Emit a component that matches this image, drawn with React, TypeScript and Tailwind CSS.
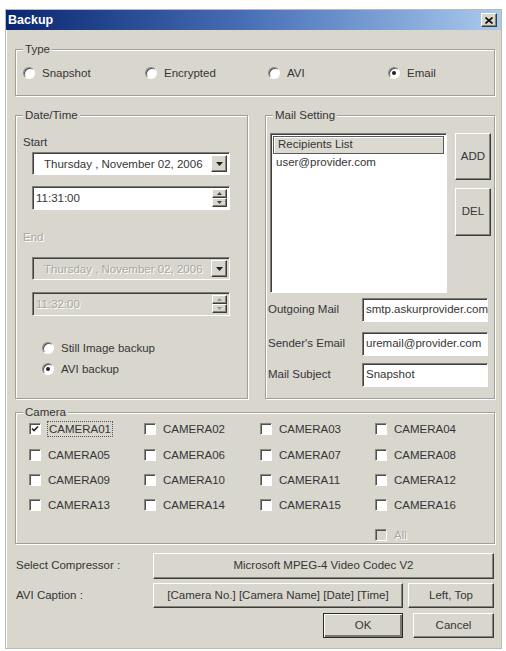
import React from "react";

const FACE = "bg-[#d9d6ce]";

function Radio({ checked, disabled }: { checked?: boolean; disabled?: boolean }) {
  return (
    <span
      className={`inline-flex h-[12px] w-[12px] shrink-0 items-center justify-center rounded-full border border-t-[#8a8780] border-l-[#8a8780] border-r-white border-b-white shadow-[inset_1px_1px_0_#505050] ${
        disabled ? FACE : "bg-white"
      }`}
    >
      {checked && <span className="h-[4px] w-[4px] rounded-full bg-[#222]" />}
    </span>
  );
}

function Check({ checked, disabled }: { checked?: boolean; disabled?: boolean }) {
  return (
    <span
      className={`inline-flex h-[12px] w-[12px] shrink-0 items-center justify-center border border-t-[#8a8780] border-l-[#8a8780] border-r-white border-b-white shadow-[inset_1px_1px_0_#505050] ${
        disabled ? FACE : "bg-white"
      }`}
    >
      {checked && (
        <svg width="8" height="8" viewBox="0 0 8 8">
          <path d="M1 3.5 L3 5.5 L7 1.5" fill="none" stroke="#222" strokeWidth="1.6" />
        </svg>
      )}
    </span>
  );
}

function Group({
  label,
  className,
  children,
}: {
  label: string;
  className?: string;
  children: React.ReactNode;
}) {
  return (
    <fieldset
      className={`min-w-0 border border-[#a29f96] shadow-[inset_1px_1px_0_#fff,1px_1px_0_#fff] ${className ?? ""}`}
    >
      <legend className={`ml-[7px] px-[2px] leading-[14px] ${FACE}`}>{label}</legend>
      {children}
    </fieldset>
  );
}

function Btn({
  children,
  className,
  isDefault,
}: {
  children: React.ReactNode;
  className?: string;
  isDefault?: boolean;
}) {
  return (
    <div
      className={`flex items-center justify-center border ${
        isDefault
          ? "border-[#2a2a2a] shadow-[inset_1px_1px_0_#fff,inset_-2px_-2px_0_#7a7770]"
          : "border-t-white border-l-white border-r-[#3c3c3c] border-b-[#3c3c3c] shadow-[inset_-1px_-1px_0_#858279]"
      } ${FACE} ${className ?? ""}`}
    >
      {children}
    </div>
  );
}

function Sunken({
  children,
  className,
  disabled,
}: {
  children?: React.ReactNode;
  className?: string;
  disabled?: boolean;
}) {
  return (
    <div
      className={`flex items-center border border-t-[#7f7c75] border-l-[#7f7c75] border-r-white border-b-white shadow-[inset_1px_1px_0_#404040] ${
        disabled ? FACE : "bg-white"
      } ${className ?? ""}`}
    >
      {children}
    </div>
  );
}

function DownArrow() {
  return (
    <svg width="7" height="4" viewBox="0 0 7 4">
      <path d="M0 0 H7 L3.5 4 Z" fill="#222" />
    </svg>
  );
}

function Combo({ text, disabled }: { text: string; disabled?: boolean }) {
  return (
    <Sunken disabled={disabled} className="ml-[9px] h-[23px] w-[198px] justify-between pl-[11px] pr-[2px]">
      <span className={disabled ? "text-[#aaa79f] [text-shadow:1px_1px_0_#fff]" : ""}>{text}</span>
      <Btn className="h-[17px] w-[16px]">
        <DownArrow />
      </Btn>
    </Sunken>
  );
}

function TimeField({ text, disabled }: { text: string; disabled?: boolean }) {
  return (
    <Sunken disabled={disabled} className="ml-[9px] h-[24px] w-[198px] justify-between pl-[3px] pr-[2px]">
      <span className={disabled ? "text-[#aaa79f] [text-shadow:1px_1px_0_#fff]" : ""}>{text}</span>
      <div className="flex flex-col">
        <Btn className="h-[9px] w-[15px]">
          <svg width="5" height="3" viewBox="0 0 5 3">
            <path d="M0 3 H5 L2.5 0 Z" fill={disabled ? "#9a978f" : "#444"} />
          </svg>
        </Btn>
        <Btn className="h-[9px] w-[15px]">
          <svg width="5" height="3" viewBox="0 0 5 3">
            <path d="M0 0 H5 L2.5 3 Z" fill={disabled ? "#9a978f" : "#444"} />
          </svg>
        </Btn>
      </div>
    </Sunken>
  );
}

const cameras = Array.from({ length: 16 }, (_, i) => `CAMERA${String(i + 1).padStart(2, "0")}`);

export default function App() {
  return (
    <div className="h-[651px] w-[506px] bg-white pl-[5px] pt-[9px] font-['Liberation_Sans',Arial,sans-serif] text-[11.5px] text-[#353535]">
      <div className={`flex h-[640px] w-[497px] flex-col border border-[#bcb9b1] shadow-[inset_1px_1px_0_#fff] ${FACE}`}>
        {/* Title bar */}
        <div className="flex h-[20px] items-center justify-between bg-gradient-to-r from-[#0b2670] via-[#4a72b8] to-[#abcaee] pl-[2px] pr-[4px]">
          <span className="text-[12.5px] font-bold text-white">Backup</span>
          <Btn className="h-[14px] w-[16px]">
            <svg width="8" height="7" viewBox="0 0 8 7">
              <path d="M0.5 0.5 L7.5 6.5 M7.5 0.5 L0.5 6.5" stroke="#111" strokeWidth="1.7" />
            </svg>
          </Btn>
        </div>

        <div className="flex flex-col pl-[9px] pr-[6px] pt-[12px]">
          {/* Type */}
          <Group label="Type" className="w-[480px]">
            <div className="grid grid-cols-[122px_123px_120px_1fr] pb-[15px] pl-[7px] pt-[10px] leading-[14px]">
              <label className="flex items-center gap-[7px]"><Radio />Snapshot</label>
              <label className="flex items-center gap-[7px]"><Radio />Encrypted</label>
              <label className="flex items-center gap-[7px]"><Radio />AVI</label>
              <label className="flex items-center gap-[7px]"><Radio checked />Email</label>
            </div>
          </Group>

          <div className="mt-[12px] flex gap-[17px]">
            {/* Date/Time */}
            <Group label="Date/Time" className="h-[291px] w-[233px]">
              <div className="flex flex-col pl-[7px] leading-[14px]">
                <span className="mt-[13px]">Start</span>
                <div className="mt-[3px]"><Combo text="Thursday  , November 02, 2006" /></div>
                <div className="mt-[11px]"><TimeField text="11:31:00" /></div>
                <span className="mt-[20px] text-[#aaa79f] [text-shadow:1px_1px_0_#fff]">End</span>
                <div className="mt-[13px]"><Combo text="Thursday  , November 02, 2006" disabled /></div>
                <div className="mt-[12px]"><TimeField text="11:32:00" disabled /></div>
                <label className="ml-[19px] mt-[25px] flex items-center gap-[7px]"><Radio />Still Image backup</label>
                <label className="ml-[19px] mt-[7px] flex items-center gap-[7px]"><Radio checked />AVI backup</label>
              </div>
            </Group>

            {/* Mail Setting */}
            <Group label="Mail Setting" className="h-[291px] w-[230px]">
              <div className="flex flex-col pl-[2px]">
                <div className="ml-[2px] mt-[11px] flex gap-[8px]">
                  <Sunken className="h-[160px] w-[177px] flex-col items-stretch p-[2px]">
                    <div className="flex h-[18px] items-center border border-[#5a5a5a] bg-[#dcd9d1] pl-[4px] shadow-[inset_1px_1px_0_#fff]">
                      Recipients List
                    </div>
                    <div className="pl-[3px] pt-[1px] leading-[14px]">user@provider.com</div>
                  </Sunken>
                  <div className="flex flex-col gap-[8px]">
                    <Btn className="h-[47px] w-[36px]">ADD</Btn>
                    <Btn className="h-[48px] w-[36px]">DEL</Btn>
                  </div>
                </div>
                <div className="mt-[5px] flex items-center">
                  <span className="w-[94px]">Outgoing Mail</span>
                  <Sunken className="h-[24px] w-[126px] pl-[3px]">smtp.askurprovider.com</Sunken>
                </div>
                <div className="mt-[10px] flex items-center">
                  <span className="w-[94px]">Sender&apos;s Email</span>
                  <Sunken className="h-[24px] w-[126px] pl-[3px]">uremail@provider.com</Sunken>
                </div>
                <div className="mt-[7px] flex items-center">
                  <span className="w-[94px]">Mail Subject</span>
                  <Sunken className="h-[24px] w-[126px] pl-[3px]">Snapshot</Sunken>
                </div>
              </div>
            </Group>
          </div>

          {/* Camera */}
          <Group label="Camera" className="mt-[6px] h-[139px] w-[480px]">
            <div className="grid grid-cols-[115px_116px_115px_1fr] gap-y-[11px] pl-[13px] pt-[2px] leading-[14px]">
              {cameras.map((c, i) => (
                <label key={c} className="flex items-center gap-[7px]">
                  <Check checked={i === 0} />
                  <span className={i === 0 ? "-mx-[1px] border border-dotted border-[#555] px-[1px]" : ""}>{c}</span>
                </label>
              ))}
            </div>
            <div className="mt-[16px] pl-[359px] leading-[14px]">
              <label className="flex items-center gap-[7px] text-[#aaa79f] [text-shadow:1px_1px_0_#fff]">
                <Check disabled />
                All
              </label>
            </div>
          </Group>

          {/* Compressor */}
          <div className="mt-[9px] flex items-center">
            <span className="w-[138px] pl-[1px]">Select Compressor :</span>
            <Btn className="h-[26px] w-[341px]">Microsoft MPEG-4 Video Codec V2</Btn>
          </div>
          <div className="mt-[4px] flex items-center">
            <span className="w-[138px] pl-[1px]">AVI Caption :</span>
            <Btn className="h-[25px] w-[250px]">[Camera No.] [Camera Name] [Date] [Time]</Btn>
            <Btn className="ml-[5px] h-[25px] w-[86px]">Left, Top</Btn>
          </div>
          <div className="mt-[5px] flex justify-end gap-[10px] pr-[1px]">
            <Btn isDefault className="h-[25px] w-[80px]">OK</Btn>
            <Btn className="h-[25px] w-[81px]">Cancel</Btn>
          </div>
        </div>
      </div>
    </div>
  );
}
